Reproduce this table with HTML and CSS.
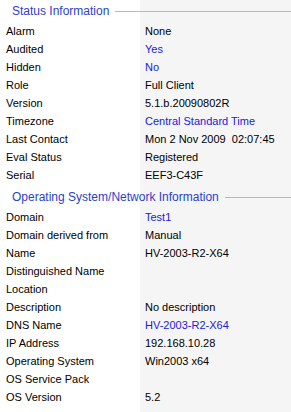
FILE: index.html
```html
<!DOCTYPE html>
<html lang="en">
<head>
    <meta charset="UTF-8">
    <meta name="viewport" content="width=device-width, initial-scale=1.0">
    <title>Properties</title>
    <link rel="stylesheet" href="styles.css">
</head>
<body>
    <div class="props">
        <!-- Status -->
        <div class="section first">
            <span class="section-title">Status Information</span>
            <span class="section-line"></span>
        </div>
        <div class="row"><span class="label">Alarm</span><span class="value">None</span></div>
        <div class="row"><span class="label">Audited</span><span class="value link">Yes</span></div>
        <div class="row"><span class="label">Hidden</span><span class="value link">No</span></div>
        <div class="row"><span class="label">Role</span><span class="value">Full Client</span></div>
        <div class="row"><span class="label">Version</span><span class="value">5.1.b.20090802R</span></div>
        <div class="row"><span class="label">Timezone</span><span class="value link">Central Standard Time</span></div>
        <div class="row"><span class="label">Last Contact</span><span class="value">Mon 2 Nov 2009&nbsp; 02:07:45</span></div>
        <div class="row"><span class="label">Eval Status</span><span class="value">Registered</span></div>
        <div class="row"><span class="label">Serial</span><span class="value">EEF3-C43F</span></div>

        <!-- OS / network -->
        <div class="section">
            <span class="section-title">Operating System/Network Information</span>
            <span class="section-line"></span>
        </div>
        <div class="row"><span class="label">Domain</span><span class="value link">Test1</span></div>
        <div class="row"><span class="label">Domain derived from</span><span class="value">Manual</span></div>
        <div class="row"><span class="label">Name</span><span class="value">HV-2003-R2-X64</span></div>
        <div class="row"><span class="label">Distinguished Name</span><span class="value"></span></div>
        <div class="row"><span class="label">Location</span><span class="value"></span></div>
        <div class="row"><span class="label">Description</span><span class="value">No description</span></div>
        <div class="row"><span class="label">DNS Name</span><span class="value link">HV-2003-R2-X64</span></div>
        <div class="row"><span class="label">IP Address</span><span class="value">192.168.10.28</span></div>
        <div class="row"><span class="label">Operating System</span><span class="value">Win2003 x64</span></div>
        <div class="row"><span class="label">OS Service Pack</span><span class="value"></span></div>
        <div class="row"><span class="label">OS Version</span><span class="value">5.2</span></div>
    </div>
</body>
</html>
```

FILE: styles.css
```css
body {
    margin: 0;
    font-family: 'Liberation Sans', Arial, sans-serif;
    font-size: 11px;
    color: #000;
    background: #fff;
}

.props {
    min-height: 412px;
    padding-top: 1px;
    background: linear-gradient(to right, #ffffff 140px, #f5f5f5 140px);
}

/* section header with rule */
.section {
    display: flex;
    align-items: center;
    height: 22px;
    margin-top: 2px;
    padding-left: 12px;
}

.section.first {
    margin-top: -1px;
}

.section-title {
    font-size: 12px;
    color: #2b3fc9;
    white-space: nowrap;
}

.section-line {
    flex-grow: 1;
    margin-left: 6px;
    border-top: 1px solid #a7b8e6;
}

.row {
    display: grid;
    grid-template-columns: 140px 1fr;
    height: 18px;
    align-items: center;
}

.label {
    padding-left: 6px;
}

.value {
    padding-left: 5px;
}

.value.link {
    color: #2020e0;
}
```
